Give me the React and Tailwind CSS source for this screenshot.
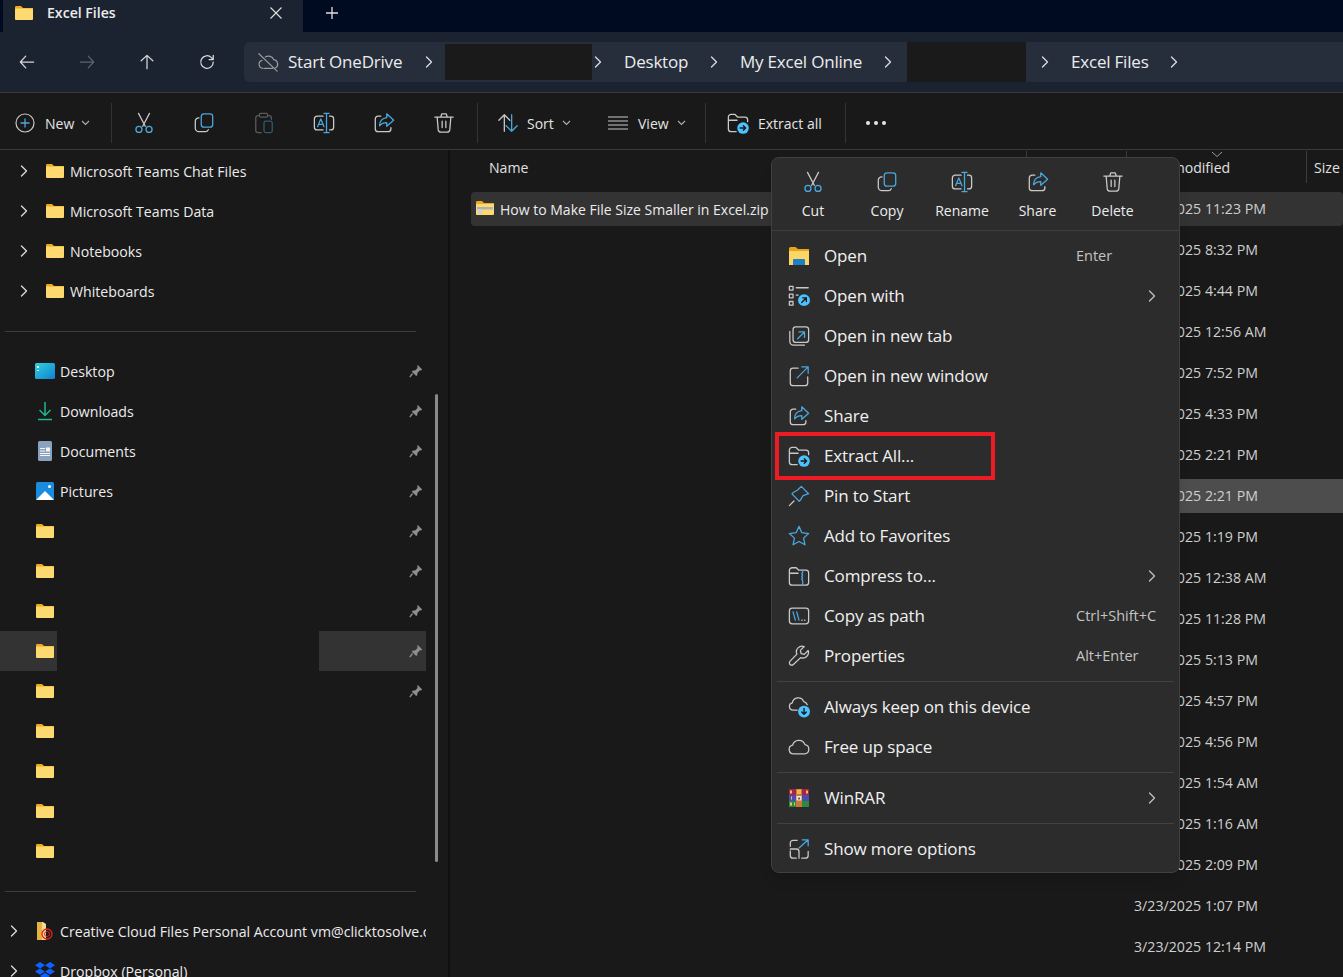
import React from "react";

const B = "#4aa8de";
const G = "#c9c9c9";

function Ic({ s = 24, children, className = "" }) {
  return (
    <svg width={s} height={s} viewBox="0 0 24 24" fill="none" strokeWidth="1.4" strokeLinecap="round" strokeLinejoin="round" className={"shrink-0 " + className}>
      {children}
    </svg>
  );
}

const Cut = ({ s }) => (
  <Ic s={s}>
    <path d="M6 1.500l7.400 14M18 1.500l-7.400 14" stroke={G} />
    <circle cx="6.500" cy="19" r="3.300" stroke={B} />
    <circle cx="17.500" cy="19" r="3.300" stroke={B} />
  </Ic>
);
const Copy = ({ s }) => (
  <Ic s={s}>
    <rect x="9" y="2" width="12.500" height="14.500" rx="3" stroke={B} />
    <path d="M6.500 6.500A3.600 3.600 0 0 0 2.500 10.100v7.500A3.900 3.900 0 0 0 6.400 21.500h7a3.400 3.400 0 0 0 3.300-2.300" stroke={G} />
  </Ic>
);
const Paste = ({ s }) => (
  <Ic s={s}>
    <path d="M7 4H5.500A2.500 2.500 0 0 0 3 6.500V20a2.500 2.500 0 0 0 2.500 2.500H9M16 4h1.500A2.500 2.500 0 0 1 20 6.500V8" stroke="#5a5a5a" />
    <rect x="7" y="1.500" width="9" height="4" rx="1.400" stroke="#5a5a5a" />
    <rect x="12" y="10" width="9" height="12.500" rx="2" stroke="#2f5a74" />
  </Ic>
);
const Rename = ({ s }) => (
  <Ic s={s}>
    <path d="M11 4.500H4.500a3 3 0 0 0-3 3v9a3 3 0 0 0 3 3H11M18 4.500h1.500a3 3 0 0 1 3 3v9a3 3 0 0 1-3 3H18" stroke={G} />
    <path d="M5 16l3.500-8.500L12 16M6.200 13.500h4.600" stroke={B} />
    <path d="M12 1.500h5.500M12 22.500h5.500M14.750 1.500v21" stroke={B} />
  </Ic>
);
const Share = ({ s }) => (
  <Ic s={s}>
    <path d="M8.500 4.500H5.500a3 3 0 0 0-3 3v11a3 3 0 0 0 3 3h11a3 3 0 0 0 3-3v-1.500" stroke={G} />
    <path d="M15 2l7.500 7-7.500 6.500V11.500c-3.400 0-5.800 1-7.800 3.500 0-5.200 2.800-8.200 7.800-8.800V2z" stroke={B} />
  </Ic>
);
const Trash = ({ s }) => (
  <Ic s={s}>
    <path d="M2 5.500h20M8.500 5.500l1-3.500h5l1 3.500M4.500 5.500l1.200 14a3 3 0 0 0 3 2.500h6.600a3 3 0 0 0 3-2.500l1.200-14M10 10v7M14 10v7" stroke={G} />
  </Ic>
);
const Badge = ({ cx = 17.500, cy = 17.500, r = 6.300 }) => <circle cx={cx} cy={cy} r={r} fill="#4cc2ff" />;
const ExtractIc = ({ s }) => (
  <Ic s={s}>
    <path d="M10 21.500H4.500a3 3 0 0 1-3-3V5.500a3 3 0 0 1 3-3h4l3 3h8a3 3 0 0 1 3 3v2M1.700 9H11" stroke={G} />
    <Badge />
    <path d="M14.300 17.500h6M17.800 15l2.500 2.500-2.500 2.500" stroke="#1a1a1a" strokeWidth="1.500" />
  </Ic>
);
const OpenIc = () => (
  <svg width="20" height="18" viewBox="0 0 20 18" className="shrink-0">
    <path d="M0 1.500A1.500 1.500 0 0 1 1.500 0h5L9 2h11v3H0z" fill="#e8a517" />
    <rect y="4" width="20" height="14" fill="#fcd767" />
    <path d="M4 13a1 1 0 0 1 1-1h10a1 1 0 0 1 1 1v5H4z" fill="#1d7fc4" />
  </svg>
);
const OpenWith = ({ s }) => (
  <Ic s={s}>
    <path d="M9 3h13" stroke={G} />
    <rect x="1.500" y="1.500" width="4" height="4" stroke={G} />
    <rect x="1.500" y="10" width="4" height="4" stroke={G} />
    <rect x="1.500" y="18" width="4" height="4" stroke={G} />
    <path d="M9 11h2" stroke={G} />
    <Badge cy="16.500" r="6.500" />
    <path d="M15 19l5-5M16 14h4v4" stroke="#1a1a1a" strokeWidth="1.500" />
  </Ic>
);
const NewTab = ({ s }) => (
  <Ic s={s}>
    <rect x="5.500" y="2" width="17" height="17" rx="3" stroke={G} />
    <path d="M2 7v11A4 4 0 0 0 6 22h12" stroke={G} />
    <path d="M10.500 15l7.500-7.500M12 7.500h6V13.500" stroke={B} />
  </Ic>
);
const NewWin = ({ s }) => (
  <Ic s={s}>
    <path d="M11 3.500H5.500a3 3 0 0 0-3 3v13a3 3 0 0 0 3 3h13a3 3 0 0 0 3-3V13" stroke={G} />
    <path d="M10 14L22 2M15 2h7v7" stroke={B} />
  </Ic>
);
const Pin = ({ s }) => (
  <Ic s={s}>
    <path d="M14.500 1.500l8 8-6 2-3 5-1.200 1.200-8-8L5.500 8.500l5-3z" stroke={B} />
    <path d="M6.500 17.500L1.500 22.500" stroke={G} />
  </Ic>
);
const Star = ({ s }) => (
  <Ic s={s}>
    <path d="M12 1.500l3.100 6.900 7.400.9-5.500 5 1.500 7.300L12 18l-6.500 3.600L7 14.300l-5.500-5 7.400-.9z" stroke={B} />
  </Ic>
);
const Compress = ({ s }) => (
  <Ic s={s}>
    <path d="M1.500 6a3 3 0 0 1 3-3h4.500L11.500 5.500h8a3 3 0 0 1 3 3V19a3 3 0 0 1-3 3h-15a3 3 0 0 1-3-3zM1.500 9h9.500" stroke={G} />
    <path d="M16 5.500v2.500l-1 1.500 1 1.500-1 1.500 1 1.500-1 1.500 1 1.500V22" stroke={B} />
  </Ic>
);
const CopyPath = ({ s }) => (
  <Ic s={s}>
    <rect x="1.500" y="3.500" width="21" height="17" rx="3" stroke={G} />
    <path d="M5.500 7.500l2.500 9M9.500 7.500l2.500 9" stroke={B} />
    <path d="M15 16.500h.5M18 16.500h.5" stroke={G} />
  </Ic>
);
const Wrench = ({ s }) => (
  <Ic s={s}>
    <path d="M22 6l-4.200 4.200-3.500-.8-.8-3.500L17.700 1.700a6.200 6.200 0 0 0-8 8.200L2.300 17.600a2.500 2.500 0 0 0 3.600 3.600l7.900-7.400A6.200 6.200 0 0 0 22 6z" stroke={G} />
  </Ic>
);
const CloudDown = ({ s }) => (
  <Ic s={s}>
    <path d="M10 15.500H5.500a4 4 0 0 1-.8-7.900 6.500 6.500 0 0 1 12.500-1.500 5 5 0 0 1 3.800 3.400" stroke={G} />
    <Badge cy="17" r="6.500" />
    <path d="M17.500 13.500v6M15 17.500l2.500 2.500 2.500-2.500" stroke="#1a1a1a" strokeWidth="1.500" />
  </Ic>
);
const CloudIc = ({ s }) => (
  <Ic s={s}>
    <path d="M6 19.500a4.800 4.800 0 0 1-.9-9.500 7 7 0 0 1 13.400-.6A5.100 5.100 0 0 1 18 19.500z" stroke={G} />
  </Ic>
);
const WinRar = () => (
  <svg width="20" height="18" viewBox="0 0 20 18" className="shrink-0">
    <rect y="0" width="20" height="6" fill="#a8224a" />
    <rect y="6" width="20" height="6" fill="#4b4bb0" />
    <rect y="12" width="20" height="6" fill="#2b8a3e" />
    <path d="M1 1.500h2v3H1zM17 1.500h2v3h-2zM1 13.500h2v3H1zM5 13.500h1v3H5zM2 7.500h1v3H2z" fill="#f0c060" />
    <rect x="7" y="0" width="6" height="18" fill="#c9793a" />
    <rect x="8" y="0.500" width="4" height="4.500" fill="#e9b84a" />
    <path d="M7.500 7h5v4.500h-5z" fill="#e8e8e8" />
    <rect x="9" y="8.500" width="2" height="2" fill="#8a5a2a" />
  </svg>
);
const ShowMore = ({ s }) => (
  <Ic s={s}>
    <path d="M10 2.500H5.500a3 3 0 0 0-3 3V9M2.500 14v5a3 3 0 0 0 3 3H9M15 22h4a3 3 0 0 0 3-3v-4.500M2.500 12H9a3 3 0 0 1 3 3v7" stroke={G} />
    <path d="M12 11L22 2M15.500 2H22v6.500" stroke={B} />
  </Ic>
);
const Chev = ({ c = "#d8d8d8", w = 8, h = 12 }) => (
  <svg width={w} height={h} viewBox="0 0 8 12" fill="none" className="shrink-0">
    <path d="M1.500 1l5 5-5 5" stroke={c} strokeWidth="1.400" strokeLinecap="round" strokeLinejoin="round" />
  </svg>
);
const Caret = () => (
  <svg width="9" height="6" viewBox="0 0 9 6" fill="none" className="shrink-0">
    <path d="M1 1l3.500 3.500L8 1" stroke="#b0b0b0" strokeWidth="1.100" />
  </svg>
);
const Folder = ({ w = 18, h = 14 }) => (
  <svg width={w} height={h} viewBox="0 0 18 14" className="shrink-0">
    <path d="M0 1.200A1.200 1.200 0 0 1 1.200 0H6l2 2h10v3H0z" fill="#eeaa1c" />
    <rect y="2.500" width="18" height="11.500" rx="1" fill="#fdd970" />
  </svg>
);
const PinSmall = () => (
  <svg width="14" height="14" viewBox="0 0 14 14" className="shrink-0">
    <path d="M8.500 0.800l4.700 4.700-1.200 1-1-.2-2.600 2.600-.1 2.200-1.100 1-4.400-4.400 1-1.100 2.200-.1 2.600-2.600-.2-1z" fill="#8b8f94" />
    <path d="M3.500 9.500L0.800 13.200" stroke="#8b8f94" strokeWidth="1.300" />
  </svg>
);

function Desk() {
  return (
    <svg width="20" height="16" viewBox="0 0 20 16" className="shrink-0">
      <defs>
        <linearGradient id="dk" x1="0" y1="0" x2="1" y2="1">
          <stop offset="0" stopColor="#2fd0e0" />
          <stop offset="1" stopColor="#1180d0" />
        </linearGradient>
      </defs>
      <rect width="20" height="16" rx="1.500" fill="url(#dk)" />
      <rect x="2" y="3" width="2" height="2" fill="#fff" />
      <rect x="2" y="7" width="2" height="1" fill="#e8ffff" />
    </svg>
  );
}
const Dl = () => (
  <svg width="20" height="20" viewBox="0 0 20 20" fill="none" className="shrink-0">
    <path d="M10 1v13M4.500 9l5.500 5.500L15.500 9M3 18.500h14" stroke="#22b592" strokeWidth="1.500" />
  </svg>
);
const Doc = () => (
  <svg width="20" height="20" viewBox="0 0 20 20" className="shrink-0">
    <rect x="3" y="0" width="14" height="20" rx="1.500" fill="#8aa2bd" />
    <path d="M5 7h5v1H5zM5 9.500h5v1H5zM5 12h10v1H5zM5 14h10v1H5z" fill="#f2f5f8" />
    <rect x="11" y="6.500" width="4" height="4" fill="#f2f5f8" />
  </svg>
);
const Pic = () => (
  <svg width="18" height="18" viewBox="0 0 18 18" className="shrink-0">
    <rect width="18" height="18" rx="1.500" fill="#1a8ce0" />
    <path d="M0 18l9-9 9 9z" fill="#fff" />
    <circle cx="13.500" cy="4.500" r="1.500" fill="#fff" />
  </svg>
);
const Zip = () => (
  <svg width="18" height="16" viewBox="0 0 18 16" className="shrink-0">
    <path d="M0 1.200A1.200 1.200 0 0 1 1.200 0H6l2 2h10v3H0z" fill="#eeaa1c" />
    <rect y="3" width="18" height="11" rx="1" fill="#fdd970" />
    <rect y="6" width="18" height="2.500" fill="#d9d9d9" />
    <path d="M2 6v2.500M4 6v2.500M6 6v2.500M8 6v2.500M10 6v2.500M12 6v2.500M14 6v2.500M16 6v2.500" stroke="#666" strokeWidth=".7" />
    <rect x="2" y="8" width="4" height="5" fill="#cfcfcf" />
  </svg>
);
const Cc = () => (
  <svg width="18" height="20" viewBox="0 0 18 20" fill="none" className="shrink-0">
    <path d="M1 1h6l3 2v16H1z" fill="#f2dc9a" />
    <path d="M1 1h5v18H1z" fill="#e7b13f" />
    <circle cx="11" cy="13" r="5" stroke="#e1251b" strokeWidth="1.300" />
    <circle cx="11" cy="13" r="2.500" stroke="#e1251b" strokeWidth="1" />
  </svg>
);
const Dropbox = () => (
  <svg width="20" height="18" viewBox="0 0 20 18" className="shrink-0">
    <path d="M5 0l5 3.200-5 3.200L0 3.200zM15 0l5 3.200-5 3.200-5-3.200zM5 6.400l5 3.200-5 3.200-5-3.200zM15 6.400l5 3.200-5 3.200-5-3.200zM5 14l5-3.200 5 3.200-5 3.200z" fill="#0f62fe" />
  </svg>
);

function TreeRow({ label }) {
  return (
    <div className="h-10 flex items-center">
      <div className="w-[46px] flex justify-center pl-0.5"><Chev /></div>
      <Folder />
      <span className="ml-1.5 pt-px text-[14.150px] text-[#ececec] whitespace-nowrap">{label}</span>
    </div>
  );
}
function PinRow({ icon, label, pin = true, active }) {
  if (active) {
    return (
      <div className="h-10 flex items-center w-[426px] relative">
        <div className="w-[57px] h-10 bg-[#333333] flex items-center justify-end pr-[3px]"><Folder /></div>
        <div className="w-[262px] h-10" />
        <div className="w-[107px] h-10 bg-[#333333] flex items-center justify-end pr-[3px]"><PinSmall /></div>
      </div>
    );
  }
  return (
    <div className="h-10 flex items-center w-[426px] pr-[3px]">
      <div className="ml-[35px] w-5 flex justify-center">{icon}</div>
      {label && <span className="ml-[5px] pt-px text-[14.150px] text-[#ececec]">{label}</span>}
      {pin && <span className="ml-auto"><PinSmall /></span>}
    </div>
  );
}
const Div = () => (
  <div className="h-10 flex items-center pl-[5px]"><div className="w-[411px] h-px bg-[#3c3c3c]" /></div>
);

function Sidebar() {
  return (
    <aside className="w-[450px] shrink-0 relative overflow-hidden border-r-2 border-[#101010] pt-px">
      {["Microsoft Teams Chat Files", "Microsoft Teams Data", "Notebooks", "Whiteboards"].map((l) => <TreeRow key={l} label={l} />)}
      <Div />
      <PinRow icon={<Desk />} label="Desktop" />
      <PinRow icon={<Dl />} label="Downloads" />
      <PinRow icon={<Doc />} label="Documents" />
      <PinRow icon={<Pic />} label="Pictures" />
      <PinRow icon={<Folder />} />
      <PinRow icon={<Folder />} />
      <PinRow icon={<Folder />} />
      <PinRow active />
      <PinRow icon={<Folder />} />
      <PinRow icon={<Folder />} pin={false} />
      <PinRow icon={<Folder />} pin={false} />
      <PinRow icon={<Folder />} pin={false} />
      <PinRow icon={<Folder />} pin={false} />
      <Div />
      <div className="h-10 flex items-center w-[426px] overflow-hidden">
        <div className="w-[28px] shrink-0 flex justify-center"><Chev /></div>
        <div className="ml-2 flex shrink-0"><Cc /></div>
        <span className="ml-[6px] pt-px text-[14.150px] text-[#ececec] whitespace-nowrap">Creative Cloud Files Personal Account vm@clicktosolve.com</span>
      </div>
      <div className="h-10 flex items-center w-[426px]">
        <div className="w-[28px] shrink-0 flex justify-center"><Chev /></div>
        <div className="ml-[7px] flex shrink-0"><Dropbox /></div>
        <span className="ml-[5px] pt-px text-[14.150px] text-[#ececec] whitespace-nowrap">Dropbox (Personal)</span>
      </div>
      <div className="absolute left-[435px] top-[244px] w-[3px] h-[468px] rounded-full bg-[#8a8a8a]" />
    </aside>
  );
}

const DATES = ["11:23 PM","8:32 PM","4:44 PM","12:56 AM","7:52 PM","4:33 PM","2:21 PM","2:21 PM","1:19 PM","12:38 AM","11:28 PM","5:13 PM","4:57 PM","4:56 PM","1:54 AM","1:16 AM","2:09 PM","1:07 PM","12:14 PM"];

function Content() {
  return (
    <main className="flex-1 min-w-0 relative overflow-hidden pt-px">
      <div className="h-[32px] flex items-stretch text-[14.100px] text-[#e0e0e0]">
        <div className="w-[576px] pl-[39px] flex items-center pt-[2px]">Name</div>
        <div className="w-[100px] border-l border-[#3c3c3c]" />
        <div className="w-[180px] border-l border-[#3c3c3c] pl-[10px] flex items-center whitespace-nowrap pt-[2px] relative">
          Date modified
          <svg width="14" height="7" viewBox="0 0 14 7" fill="none" className="absolute left-[83px] top-0">
            <path d="M2 1l5 4.500L12 1" stroke="#9a9a9a" />
          </svg>
        </div>
        <div className="flex-1 border-l border-[#3c3c3c] pl-[7px] flex items-center pt-[2px]">Size</div>
      </div>
      <div className="pl-[21px] pt-[9px] flex flex-col gap-[7px]">
        {DATES.map((d, i) => (
          <div key={i} className={"h-[34px] flex items-stretch text-[14.200px] whitespace-nowrap " + (i === 0 ? "bg-[#333333] rounded-sm" : "")}>
            <div className="w-[663px] pl-[5px] flex items-center">
              {i === 0 && <><Zip /><span className="ml-[6px] text-[14px] text-[#ececec]">How to Make File Size Smaller in Excel.zip</span></>}
            </div>
            <span className={"flex-1 flex items-center text-[#cfcfcf] " + (i === 7 ? "bg-[#4d4d4d]" : "")}>3/23/2025 {d}</span>
          </div>
        ))}
      </div>
    </main>
  );
}

function TopAct({ icon, label, w }) {
  return (
    <div className="flex flex-col items-center" style={{ width: w }}>
      <div className="h-[24px] flex items-center">{icon}</div>
      <span className="mt-[7px] text-[14px] text-[#ececec] leading-5">{label}</span>
    </div>
  );
}
function Item({ icon, label, hint, sub }) {
  return (
    <div className="h-10 flex items-center pl-[17px] pr-[20px]">
      <div className="w-5 flex justify-center">{icon}</div>
      <span className="ml-[15px] text-[17px] tracking-[-0.15px] text-[#f0f0f0] whitespace-nowrap">{label}</span>
      {hint && <span className="ml-auto text-[14.500px] text-[#c4c4c4] w-[83px] whitespace-nowrap">{hint}</span>}
      {sub && <span className="ml-auto mr-[3px]"><Chev c="#bdbdbd" w={8} h={12} /></span>}
    </div>
  );
}
const MDiv = () => <div className="h-[11px] flex items-center px-[5px]"><div className="h-px w-full bg-[#424242]" /></div>;

function Menu() {
  return (
    <div className="absolute left-[771px] top-[157px] w-[409px] h-[716px] rounded-lg bg-[#2c2c2c] border border-[#404040] shadow-lg">
      <div className="h-[73px] pt-[12px] flex pl-[4px] border-b border-[#3f3f3f]">
        <TopAct icon={<Cut s={22} />} label="Cut" w={74} />
        <TopAct icon={<Copy s={22} />} label="Copy" w={74} />
        <TopAct icon={<Rename s={22} />} label="Rename" w={76} />
        <TopAct icon={<Share s={22} />} label="Share" w={75} />
        <TopAct icon={<Trash s={22} />} label="Delete" w={75} />
      </div>
      <div className="pt-[5px]">
        <Item icon={<OpenIc />} label="Open" hint="Enter" />
        <Item icon={<OpenWith s={22} />} label="Open with" sub />
        <Item icon={<NewTab s={22} />} label="Open in new tab" />
        <Item icon={<NewWin s={22} />} label="Open in new window" />
        <Item icon={<Share s={22} />} label="Share" />
        <Item icon={<ExtractIc s={22} />} label="Extract All..." />
        <Item icon={<Pin s={22} />} label="Pin to Start" />
        <Item icon={<Star s={22} />} label="Add to Favorites" />
        <Item icon={<Compress s={22} />} label="Compress to..." sub />
        <Item icon={<CopyPath s={22} />} label="Copy as path" hint="Ctrl+Shift+C" />
        <Item icon={<Wrench s={22} />} label="Properties" hint="Alt+Enter" />
        <MDiv />
        <Item icon={<CloudDown s={22} />} label="Always keep on this device" />
        <Item icon={<CloudIc s={22} />} label="Free up space" />
        <MDiv />
        <Item icon={<WinRar />} label="WinRAR" sub />
        <MDiv />
        <Item icon={<ShowMore s={22} />} label="Show more options" />
      </div>
      <div className="absolute left-[3px] top-[274px] w-[220px] h-[48px] border-4 border-[#ed1c24]" />
    </div>
  );
}

function Crumb({ w, label }) {
  return (
    <div className="flex items-center shrink-0" style={{ width: w }}>
      {label}
    </div>
  );
}

function NavBar() {
  const seg = "flex items-center shrink-0 whitespace-nowrap text-[17px] tracking-[-0.2px] text-[#ececec]";
  return (
    <div className="h-[60px] bg-[#1b2330] flex items-center">
      <div className="flex -ml-[3px]">
        {[
          <path key="b" d="M20 12H4M10.500 5L4 12l6.500 7" stroke="#d8d8d8" />,
          <path key="f" d="M4 12h16M13.500 5L20 12l-6.500 7" stroke="#5e646d" />,
          <path key="u" d="M12 20V4M5 10.500L12 4l7 6.500" stroke="#d8d8d8" />,
          <path key="r" d="M19.500 12a7.500 7.500 0 1 1-2.200-5.300L19.500 9M19.500 4v5h-5" stroke="#d8d8d8" />,
        ].map((p, i) => (
          <div key={i} className="w-[60px] flex justify-center">
            <svg width="20" height="20" viewBox="0 0 24 24" fill="none" strokeWidth="1.500" strokeLinecap="round" strokeLinejoin="round">{p}</svg>
          </div>
        ))}
      </div>
      <div className="ml-[7px] flex-1 h-10 bg-[#262e3b] rounded-l-md flex items-stretch">
        <div className={seg + " w-[201px] pl-[13px]"}>
          <svg width="22" height="22" viewBox="0 0 24 24" fill="none" strokeWidth="1.300" stroke="#9a9a9a" strokeLinecap="round" strokeLinejoin="round" className="shrink-0">
            <path d="M6.500 19a4.500 4.500 0 0 1-1-8.800M9 6.500a6.500 6.500 0 0 1 9.300 3A4.800 4.800 0 0 1 20 18.500M8 19h9M2 3l20 19" />
          </svg>
          <span className="ml-[9px]">Start OneDrive</span>
          <span className="ml-auto mr-[12px]"><Chev /></span>
        </div>
        <div className="w-[147px] bg-[#1a1a1a] shrink-0 my-[2px]" />
        <div className={seg + " w-[32px] pl-[2px]"}><Chev /></div>
        <Crumb w={86} label={<span className={seg}>Desktop</span>} />
        <div className={seg + " w-[30px]"}><Chev /></div>
        <Crumb w={144} label={<span className={seg}>My Excel Online</span>} />
        <div className={seg + " w-[23px]"}><Chev /></div>
        <div className="w-[119px] bg-[#1a1a1a] shrink-0" />
        <div className={seg + " w-[45px] pl-[15px]"}><Chev /></div>
        <Crumb w={99} label={<span className={seg}>Excel Files</span>} />
        <div className={seg + " w-[10px]"}><Chev /></div>
      </div>
    </div>
  );
}

const Sep = () => <div className="w-px h-10 bg-[#333333] shrink-0" />;

function ToolBar() {
  const t = "text-[14px] text-[#e4e4e4] whitespace-nowrap";
  return (
    <div className="h-[58px] shrink-0 bg-[#191919] border-y border-[#3a3a3a] flex items-center pt-[4px]">
      <div className="w-[111px] flex items-center pl-[15px]">
        <svg width="20" height="20" viewBox="0 0 20 20" fill="none" className="shrink-0">
          <circle cx="10" cy="10" r="9" stroke={G} strokeWidth="1.200" />
          <path d="M10 5.500v9M5.500 10h9" stroke={B} strokeWidth="1.300" />
        </svg>
        <span className={t + " ml-[10px]"}>New</span>
        <span className="ml-[7px] flex"><Caret /></span>
      </div>
      <Sep />
      <div className="flex ml-[2px]">
        {[<Cut s={22} />, <Copy s={22} />, <Paste s={22} />, <Rename s={22} />, <Share s={22} />, <Trash s={22} />].map((ic, i) => (
          <div key={i} className="w-[60px] flex justify-center">{ic}</div>
        ))}
      </div>
      <div className="ml-[3px]"><Sep /></div>
      <div className="w-[114px] flex items-center pl-[19px]">
        <svg width="22" height="22" viewBox="0 0 24 24" fill="none" strokeWidth="1.400" strokeLinecap="round" strokeLinejoin="round" className="shrink-0">
          <path d="M8 21V3M2 9l6-6 6 6" stroke={G} />
          <path d="M16 3v18M10 15l6 6 6-6" stroke={B} />
        </svg>
        <span className={t + " ml-[8px]"}>Sort</span>
        <span className="ml-[8px] flex"><Caret /></span>
      </div>
      <div className="w-[113px] flex items-center pl-[16px]">
        <svg width="20" height="14" viewBox="0 0 20 14" fill="none" stroke={G} strokeWidth="1.200" className="shrink-0">
          <path d="M0 1h20M0 5h20M0 9h20M0 13h20" />
        </svg>
        <span className={t + " ml-[10px]"}>View</span>
        <span className="ml-[8px] flex"><Caret /></span>
      </div>
      <Sep />
      <div className="w-[139px] flex items-center pl-[21px]">
        <ExtractIc s={22} />
        <span className={t + " ml-[9px]"}>Extract all</span>
      </div>
      <Sep />
      <div className="ml-[20px] flex gap-[4px]">
        <span className="w-1 h-1 rounded-full bg-[#e8e8e8]" />
        <span className="w-1 h-1 rounded-full bg-[#e8e8e8]" />
        <span className="w-1 h-1 rounded-full bg-[#e8e8e8]" />
      </div>
    </div>
  );
}

function TitleBar() {
  return (
    <div className="h-8 shrink-0 bg-[#000a20] flex items-stretch">
      <div className="ml-[3px] w-[300px] bg-[#1b2330] flex items-center pl-[12px] pr-[20px] pb-[7px]">
        <Folder w={18} h={14} />
        <span className="ml-[14px] text-[14.100px] font-semibold text-[#ececec]">Excel Files</span>
        <svg width="14" height="14" viewBox="0 0 14 14" fill="none" className="ml-auto"><path d="M1.500 1.500l11 11M12.500 1.500l-11 11" stroke="#e0e0e0" strokeWidth="1.100" /></svg>
      </div>
      <div className="ml-[22px] flex items-center pb-[7px]">
        <svg width="14" height="14" viewBox="0 0 14 14" fill="none"><path d="M7 1v12M1 7h12" stroke="#e0e0e0" strokeWidth="1.300" /></svg>
      </div>
    </div>
  );
}

export default function App() {
  return (
    <div className="w-[1343px] h-[977px] relative overflow-hidden bg-[#191919] flex flex-col font-['Open_Sans',sans-serif]">
      <TitleBar />
      <NavBar />
      <ToolBar />
      <div className="flex-1 min-h-0 flex">
        <Sidebar />
        <Content />
      </div>
      <Menu />
    </div>
  );
}
